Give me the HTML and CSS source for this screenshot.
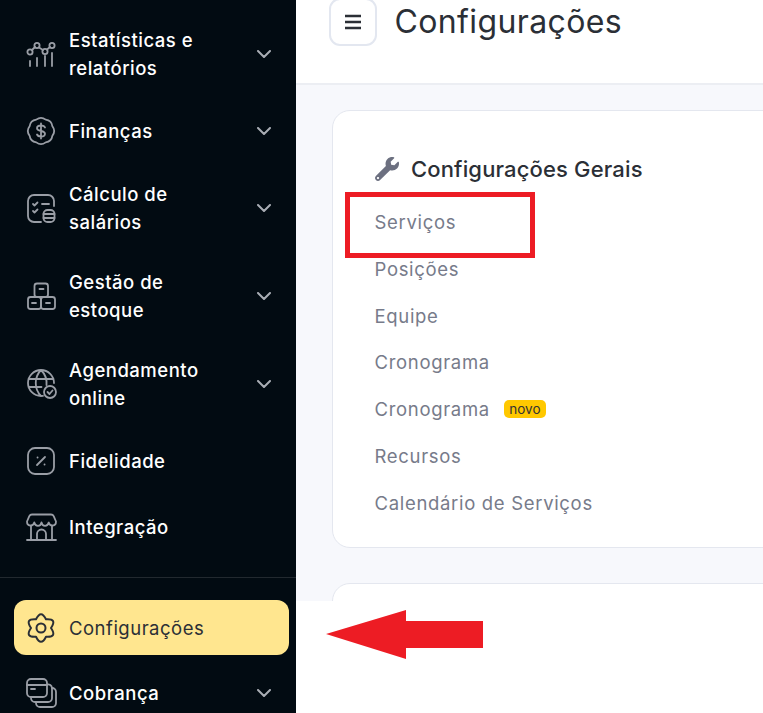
FILE: index.html
```html
<!DOCTYPE html>
<html lang="pt">
<head>
<meta charset="utf-8">
<title>Configurações</title>
<link rel="stylesheet" href="styles.css">
</head>
<body>
<div class="app">
  <aside class="sidebar">
    <nav class="nav">
      <a class="item two">
        <svg class="icon" viewBox="0 0 32 32"><circle cx="5" cy="14" r="2.6"/><circle cx="12" cy="7.5" r="2.6"/><circle cx="20" cy="13.5" r="2.6"/><circle cx="27" cy="7.5" r="2.6"/><path d="M7 12l3-3M14 9.500l4 2.500M22 11.500l3-2.500M5 23v5M12 20v8M20 18v10M27 15v13"/></svg>
        <span class="label">Estatísticas e relatórios</span>
        <svg class="chev" viewBox="0 0 14 8"><path d="M1 1l6 6 6-6"/></svg>
      </a>
      <a class="item">
        <svg class="icon" viewBox="0 0 32 32"><path d="M11.300 4.600Q16 1 20.700 4.600 26.600 5.400 27.400 11.300 31 16 27.400 20.700 26.600 26.600 20.700 27.400 16 31 11.300 27.400 5.400 26.600 4.600 20.700 1 16 4.600 11.300 5.400 5.400 11.300 4.600Z"/><path d="M20 12.500c-.6-1.400-2-2-4-2-2.400 0-4 1.100-4 2.800 0 3.600 8 1.800 8 5.400 0 1.700-1.600 2.800-4 2.800-2 0-3.400-.7-4-2M16 8.500v15"/></svg>
        <span class="label">Finanças</span>
        <svg class="chev" viewBox="0 0 14 8"><path d="M1 1l6 6 6-6"/></svg>
      </a>
      <a class="item two">
        <svg class="icon" viewBox="0 0 32 32"><path d="M29 14V9a6 6 0 0 0-6-6H9a6 6 0 0 0-6 6v15a6 6 0 0 0 6 6h7"/><path d="M8 12l1.500 1.500 3-3M8 19l1.500 1.500 3-3M17 12h7"/><rect x="18.500" y="18" width="11" height="12" rx="4"/><path d="M18.500 22h11M18.500 26h11"/></svg>
        <span class="label">Cálculo de salários</span>
        <svg class="chev" viewBox="0 0 14 8"><path d="M1 1l6 6 6-6"/></svg>
      </a>
      <a class="item two">
        <svg class="icon" viewBox="0 0 32 32"><rect x="9.500" y="3.500" width="13.500" height="13.500" rx="2.500"/><rect x="3" y="17" width="13" height="12" rx="2.500"/><rect x="16" y="17" width="14" height="12" rx="2.500"/><path d="M14.500 9h4M7 23h4M21 23h4"/></svg>
        <span class="label">Gestão de estoque</span>
        <svg class="chev" viewBox="0 0 14 8"><path d="M1 1l6 6 6-6"/></svg>
      </a>
      <a class="item two">
        <svg class="icon" viewBox="0 0 32 32"><path d="M29 15a13 13 0 1 0-13 13c.6 0 1.200 0 2-.1M3.500 11h25M3.500 19h13M16 2c-7 7-7 19 0 26M16 2c4.500 4.500 6 10 5.500 15"/><circle cx="25" cy="24" r="6"/><path d="M22.500 24l2 2 3-3.500"/></svg>
        <span class="label">Agendamento online</span>
        <svg class="chev" viewBox="0 0 14 8"><path d="M1 1l6 6 6-6"/></svg>
      </a>
      <a class="item">
        <svg class="icon" viewBox="0 0 32 32"><rect x="3" y="3" width="26" height="26" rx="7"/><path d="M12 20l8-8M12.500 12.500h.1M19.500 19.500h.1"/></svg>
        <span class="label">Fidelidade</span>
      </a>
      <a class="item">
        <svg class="icon" viewBox="0 0 32 32"><path d="M2 29h29M6 14.500V29M27 14.500V29M12 29v-6a4.500 4.500 0 0 1 9 0v6"/><path d="M7 3.500h19a3 3 0 0 1 2.700 1.700L31 10.500c0 5-6 5.500-7.300 1-1 4.500-6.400 4.500-7.200 0-.8 4.500-6.200 4.500-7.200 0C8 16 2 15.500 2 10.500l2.300-5.300A3 3 0 0 1 7 3.500z"/></svg>
        <span class="label">Integração</span>
      </a>
    </nav>
    <div class="divider"></div>
    <a class="active">
      <svg class="icon" viewBox="0 0 32 32"><path d="M11 7.300Q16-3 21 7.300 32.500 6.500 26 16 32.500 25.500 21 24.700 16 35 11 24.700-.5 25.500 6 16-.5 6.500 11 7.300Z"/><circle cx="16" cy="16" r="4.500"/></svg>
      <span class="label">Configurações</span>
    </a>
    <a class="item after">
      <svg class="icon" viewBox="0 0 32 32"><rect x="2" y="2" width="20" height="18" rx="4"/><path d="M2 8h20M6 12h4"/><path d="M6 20v1a4 4 0 0 0 4 4h13a4 4 0 0 0 4-4V11a4 4 0 0 0-5-3.500"/><path d="M11 25v1a4 4 0 0 0 4 4h12a4 4 0 0 0 4-4V15a4 4 0 0 0-4-4"/></svg>
      <span class="label">Cobrança</span>
      <svg class="chev" viewBox="0 0 14 8"><path d="M1 1l6 6 6-6"/></svg>
    </a>
  </aside>
  <main class="main">
    <header class="topbar">
      <button class="menu" type="button" aria-label="Menu">
        <svg viewBox="0 0 18 16" class="burger"><path d="M1 2h16M1 8h16M1 14h16"/></svg>
      </button>
      <h1 class="title">Configurações</h1>
    </header>
    <section class="content">
      <div class="card">
        <h2 class="card-title">
          <svg class="wrench" viewBox="0 0 512 512"><path d="M507.730 109.100c-2.240-9.030-13.540-12.090-20.120-5.510l-74.360 74.360-67.880-11.310-11.310-67.880 74.360-74.360c6.620-6.620 3.430-17.900-5.660-20.160-47.380-11.740-99.550.91-136.580 37.930-39.640 39.640-50.550 97.100-34.050 147.200L18.740 402.760c-24.990 24.990-24.990 65.510 0 90.500 24.990 24.990 65.510 24.990 90.500 0l213.210-213.210c50.120 16.710 107.470 5.680 147.370-34.220 37.070-37.070 49.700-89.320 37.910-136.730zM64 472c-13.250 0-24-10.750-24-24 0-13.260 10.750-24 24-24s24 10.740 24 24c0 13.250-10.750 24-24 24z"/></svg>
          Configurações Gerais
        </h2>
        <ul class="links">
          <li>Serviços</li>
          <li>Posições</li>
          <li>Equipe</li>
          <li>Cronograma</li>
          <li>Cronograma <span class="badge">novo</span></li>
          <li>Recursos</li>
          <li>Calendário de Serviços</li>
        </ul>
      </div>
      <div class="card next"></div>
    </section>
  </main>
</div>
<div class="mark-box"></div>
<svg class="mark-arrow" viewBox="0 0 157 49"><path d="M0 24 80 0V11H157V38H80V49Z"/></svg>
</body>
</html>
```
FILE: styles.css
```css
* { box-sizing: border-box; }
html, body { margin: 0; height: 100%; background: #fff; overflow: hidden; }
body { font-family: Inter, "Liberation Sans", sans-serif; }
.app { display: flex; height: 713px; overflow: hidden; }

.sidebar { flex: 0 0 296px; background: #020b12; padding-top: 10px; overflow: hidden; }
.nav { display: flex; flex-direction: column; }
.item { display: flex; align-items: center; padding: 17px 25px 17px 25px; height: 66px; color: #fff; }
.item.two { height: 88px; }
.item.after { margin-top: 5px; }
.icon { flex: 0 0 32px; width: 32px; height: 32px; fill: none; stroke: #9a9ea6; stroke-width: 1.8; stroke-linecap: round; stroke-linejoin: round; }
.label { flex: 1; margin-left: 12px; font-size: 18.500px; line-height: 28px; font-weight: 500; letter-spacing: .5px; padding-right: 40px; }
.chev { flex: 0 0 14px; width: 14px; height: 8px; fill: none; stroke: #a9adb4; stroke-width: 2; stroke-linecap: round; stroke-linejoin: round; }
.divider { height: 1px; background: #22292f; margin: 17px 0 22px; }
.active { display: flex; align-items: center; height: 55px; margin: 0 7px 0 14px; padding-left: 11px; background: #ffe68f; border-radius: 12px; color: #2b2f36; }
.active .icon { stroke: #2b2f36; stroke-width: 2; }
.active .label { font-weight: 400; }

.main { flex: 1; min-width: 0; display: flex; flex-direction: column; overflow: hidden; }
.topbar { display: flex; align-items: flex-start; height: 85px; padding-left: 32.500px; border-bottom: 2px solid #eceef3; background: #fff; }
.menu { display: flex; align-items: center; justify-content: center; width: 48px; height: 48px; margin-top: -2px; background: #fff; border: 2px solid #e3e7f0; border-radius: 11px; padding: 0; }
.burger { width: 18px; height: 16px; fill: none; stroke: #2b2f36; stroke-width: 2.600; }
.title { margin: -2px 0 0 18px; font-size: 32px; line-height: 48px; font-weight: 400; color: #2b2f36; letter-spacing: .38px; }

.content { height: 516px; padding: 25px 0 0 36px; background: #f7f8fc; overflow: hidden; }
.card { width: 500px; height: 438px; padding: 42px 0 0 41.500px; background: #fff; border: 1px solid #e4e7ef; border-radius: 18px; }
.card.next { height: 100px; margin-top: 35px; }
.card-title { display: flex; align-items: center; gap: 12px; height: 32px; margin: 0; font-size: 22px; font-weight: 500; color: #2b2f36; letter-spacing: .15px; }
.wrench { width: 24px; height: 24px; margin-left: .5px; fill: #6c7080; }
.links { list-style: none; margin: 14px 0 0; padding: 0; display: flex; flex-direction: column; }
.links li { height: 46.800px; line-height: 46.800px; font-size: 18.500px; color: #777b8a; letter-spacing: .68px; }
.badge { display: inline-block; margin-left: 8px; padding: 0 5.500px; height: 18px; line-height: 18px; vertical-align: 2px; background: #ffc800; border-radius: 5px; font-size: 13.500px; color: #333; letter-spacing: 0; }

.mark-box { position: absolute; left: 345px; top: 192px; width: 190px; height: 66px; border: 5px solid #ed1c24; }
.mark-arrow { position: absolute; left: 326px; top: 610px; width: 157px; height: 49px; fill: #ed1c24; }
```
